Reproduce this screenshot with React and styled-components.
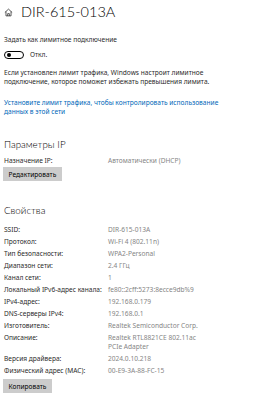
import React from "react";
import styled, { createGlobalStyle } from "styled-components";

const Global = createGlobalStyle`
  html, body { margin: 0; padding: 0; background: #ffffff; }
  body { font-family: "Noto Sans", "Open Sans", sans-serif; color: #2b2b2b; }
  * { box-sizing: border-box; }
`;

const Page = styled.div`
  width: 280px;
  height: 400px;
  overflow: hidden;
  padding: 3px 4px 0 4px;
  display: flex;
  flex-direction: column;
`;

const Header = styled.div`
  display: flex;
  align-items: center;
  gap: 8px;
  height: 18px;
`;

const Title = styled.h1`
  margin: 0;
  font-family: "Lato", "Open Sans", sans-serif;
  font-weight: 300;
  font-size: 14.5px;
  line-height: 18px;
  color: #000;
`;

const Text = styled.div`
  font-size: 6.6px;
  line-height: 9px;
  color: ${(p) => p.$color || "#2b2b2b"};
  margin-top: ${(p) => p.$mt || 0}px;
  max-width: ${(p) => p.$max || 270}px;
`;

const ToggleRow = styled.div`
  display: flex;
  align-items: center;
  gap: 6px;
  margin-top: 6px;
`;

const Toggle = styled.div`
  width: 20px;
  height: 8px;
  border: 1px solid #000;
  border-radius: 5px;
  display: flex;
  align-items: center;
  padding-left: 2px;
`;

const Knob = styled.div`
  width: 4px;
  height: 4px;
  border-radius: 50%;
  background: #000;
`;

const SectionTitle = styled.h2`
  margin: 0;
  margin-top: ${(p) => p.$mt || 0}px;
  font-family: "Lato", "Open Sans", sans-serif;
  font-weight: 300;
  font-size: 9.8px;
  line-height: 12px;
  color: #000;
`;

const Grid = styled.div`
  display: grid;
  grid-template-columns: 104px 102px;
  row-gap: ${(p) => p.$gap || 0}px;
  margin-top: ${(p) => p.$mt || 0}px;
  font-size: 6.6px;
  line-height: 9px;
`;

const Label = styled.div`
  color: #2b2b2b;
`;

const Value = styled.div`
  color: #858585;
`;

const Button = styled.button`
  align-self: flex-start;
  margin-top: ${(p) => p.$mt || 0}px;
  margin-left: -1px;
  height: 14px;
  padding: 0 5.5px;
  border: none;
  background: #cccccc;
  font-family: "Noto Sans", "Open Sans", sans-serif;
  font-size: 6.6px;
  color: #000;
`;

function HomeIcon() {
  return (
    <svg width="9" height="9" viewBox="0 0 16 16" fill="none" stroke="#222" strokeWidth="1.3">
      <path d="M1.5 8 L8 2 L14.5 8" />
      <path d="M3.5 6.3 V14 H12.5 V6.3" />
      <path d="M6.5 14 V10 H9.5 V14" />
    </svg>
  );
}

const props = [
  ["SSID:", "DIR-615-013A"],
  ["Протокол:", "Wi-Fi 4 (802.11n)"],
  ["Тип безопасности:", "WPA2-Personal"],
  ["Диапазон сети:", "2.4 ГГц"],
  ["Канал сети:", "1"],
  ["Локальный IPv6-адрес канала:", "fe80::2cff:5273:8ecce9db%9"],
  ["IPv4-адрес:", "192.168.0.179"],
  ["DNS-серверы IPv4:", "192.168.0.1"],
  ["Изготовитель:", "Realtek Semiconductor Corp."],
  ["Описание:", "Realtek RTL8821CE 802.11ac PCIe Adapter"],
  ["Версия драйвера:", "2024.0.10.218"],
  ["Физический адрес (MAC):", "00-E9-3A-88-FC-15"],
];

export default function App() {
  return (
    <>
      <Global />
      <Page>
        <Header>
          <HomeIcon />
          <Title>DIR-615-013A</Title>
        </Header>
        <Text $mt={14}>Задать как лимитное подключение</Text>
        <ToggleRow>
          <Toggle>
            <Knob />
          </Toggle>
          <Text>Откл.</Text>
        </ToggleRow>
        <Text $mt={9} $max={220}>
          Если установлен лимит трафика, Windows настроит лимитное подключение, которое поможет избежать превышения лимита.
        </Text>
        <Text $mt={12} $max={220} $color="#0067b8">
          Установите лимит трафика, чтобы контролировать использование данных в этой сети
        </Text>
        <SectionTitle $mt={22}>Параметры IP</SectionTitle>
        <Grid $mt={6}>
          <Label>Назначение IP:</Label>
          <Value>Автоматически (DHCP)</Value>
        </Grid>
        <Button $mt={2}>Редактировать</Button>
        <SectionTitle $mt={23}>Свойства</SectionTitle>
        <Grid $mt={9} $gap={3}>
          {props.map(([l, v]) => (
            <React.Fragment key={l}>
              <Label>{l}</Label>
              <Value>{v}</Value>
            </React.Fragment>
          ))}
        </Grid>
        <Button $mt={4}>Копировать</Button>
      </Page>
    </>
  );
}
